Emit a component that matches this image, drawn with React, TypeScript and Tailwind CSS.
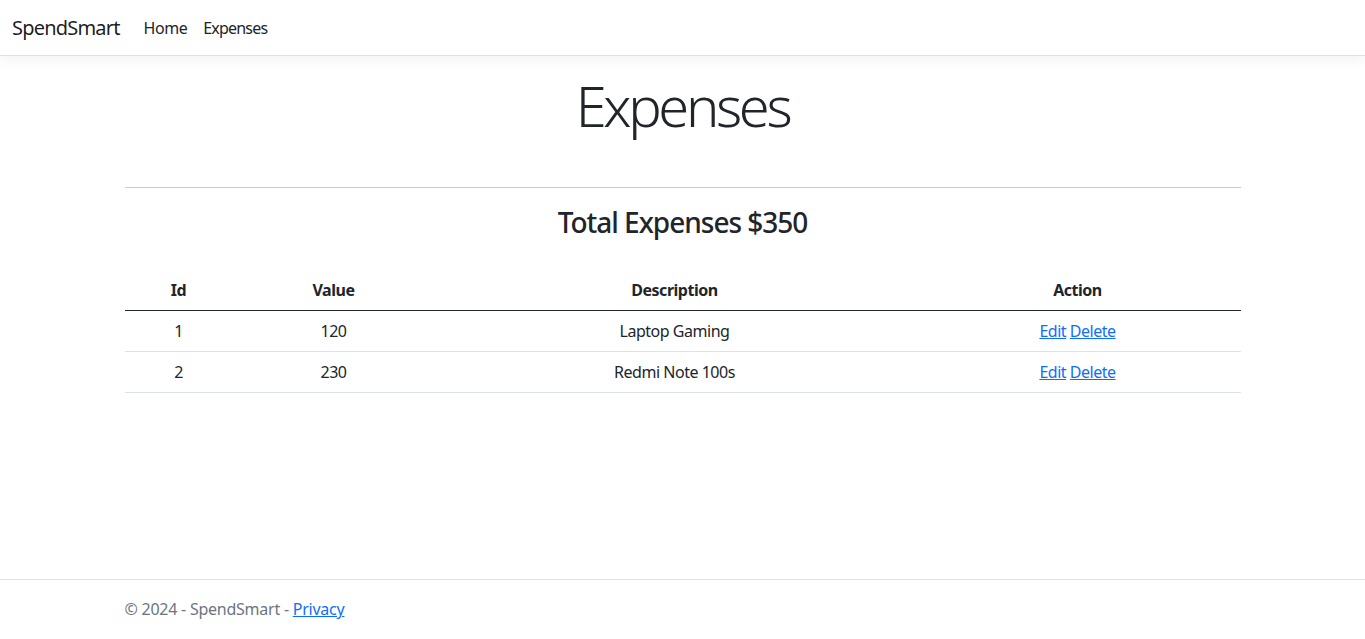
import React from "react";

const rows = [
  { id: 1, value: 120, description: "Laptop Gaming" },
  { id: 2, value: 230, description: "Redmi Note 100s" },
];

export default function App() {
  return (
    <div
      className="flex min-h-screen flex-col bg-white text-[16px] leading-6 tracking-[-0.03em] text-[#212529]"
      style={{ fontFamily: '"Noto Sans", "Open Sans", Arial, sans-serif' }}
    >
      <header>
        <nav className="flex h-[56px] items-center border-b border-[#dee2e6] bg-white px-3 shadow-[0_4px_12px_rgba(0,0,0,0.05)]">
          <a className="mr-4 text-[20px] leading-[30px] tracking-[-0.04em] text-black/90" href="#">
            SpendSmart
          </a>
          <ul className="flex">
            <li>
              <a className="block px-2 py-2 text-[#212529]" href="#">
                Home
              </a>
            </li>
            <li>
              <a className="block px-2 py-2 tracking-[-0.05em] text-[#212529]" href="#">
                Expenses
              </a>
            </li>
          </ul>
        </nav>
      </header>

      <main className="mx-auto mt-4 w-full max-w-[1140px] px-3 pb-3">
        <h1 className="text-center text-[56px] font-light leading-[67px] tracking-[-0.06em]">Expenses</h1>
        <hr className="mt-[48px] border-0 border-t border-[#c8c9ca]" />
        <h3 className="mt-[17px] text-center text-[28px] font-medium leading-[34px] tracking-[-0.036em]">
          Total Expenses $350
        </h3>
        <table className="mt-[31px] w-full border-collapse text-center">
          <thead>
            <tr className="border-b border-[#212529]">
              <th className="w-[108px] px-2 py-2 font-bold">Id</th>
              <th className="w-[202px] px-2 py-2 font-bold">Value</th>
              <th className="w-[480px] px-2 py-2 font-bold">Description</th>
              <th className="w-[326px] px-2 py-2 font-bold">Action</th>
            </tr>
          </thead>
          <tbody>
            {rows.map((r) => (
              <tr key={r.id} className="border-b border-[#dee2e6]">
                <td className="px-2 py-2">{r.id}</td>
                <td className="px-2 py-2">{r.value}</td>
                <td className="px-2 py-2">{r.description}</td>
                <td className="px-2 py-2">
                  <a className="text-[#0d6efd] underline" href="#">
                    Edit
                  </a>{" "}
                  <a className="text-[#0d6efd] underline" href="#">
                    Delete
                  </a>
                </td>
              </tr>
            ))}
          </tbody>
        </table>
      </main>

      <footer className="mt-auto border-t border-[#dee2e6] leading-[59px] tracking-[-0.015em] text-[#6c757d]">
        <div className="mx-auto w-full max-w-[1140px] px-3">
          © 2024 - SpendSmart -{" "}
          <a className="text-[#0d6efd] underline" href="#">
            Privacy
          </a>
        </div>
      </footer>
    </div>
  );
}
